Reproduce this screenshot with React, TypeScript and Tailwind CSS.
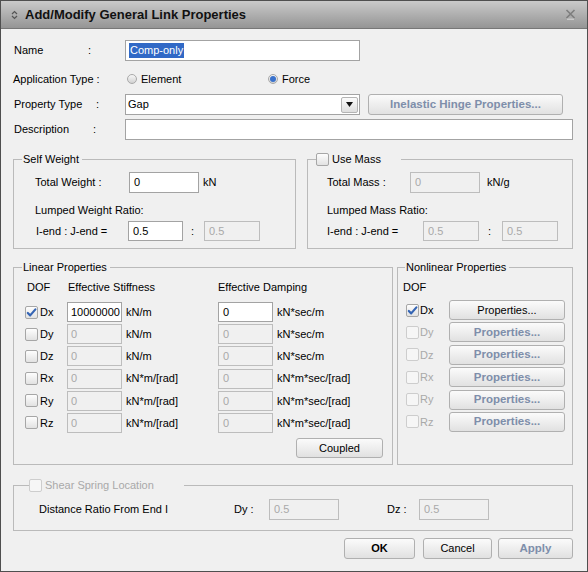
import React from 'react';

function Check({ checked = false, disabled = false }: { checked?: boolean; disabled?: boolean }) {
  return (
    <span
      className={`inline-flex h-[13px] w-[13px] shrink-0 items-center justify-center rounded-[2px] border ${
        disabled ? 'border-[#cdcdcd] bg-[#f6f6f6]' : 'border-[#a6a6a6] bg-linear-to-b from-[#fdfdfd] to-[#e2e2e2]'
      }`}
    >
      {checked && (
        <svg width="11" height="11" viewBox="0 0 11 11">
          <path d="M1.8 6 L4.2 8.4 L9.4 2.4" fill="none" stroke="#3565b4" strokeWidth="2.2" strokeLinecap="round" strokeLinejoin="round" />
        </svg>
      )}
    </span>
  );
}

function Radio({ on = false }: { on?: boolean }) {
  return (
    <span className="inline-flex h-[10px] w-[10px] shrink-0 items-center justify-center rounded-full border border-[#a9a9a9] bg-linear-to-b from-[#f7f7f7] to-[#d2d2d2]">
      {on && <span className="h-[6px] w-[6px] rounded-full bg-[#3a72cc]" />}
    </span>
  );
}

function Box({ value = '', disabled = false, className = '' }: { value?: string; disabled?: boolean; className?: string }) {
  return (
    <div
      className={`flex shrink-0 items-center border pl-[4px] ${
        disabled ? 'border-[#bdbdbd] bg-[#f0f0f0] text-[#a9a9a9]' : 'border-[#a3a3a3] bg-white text-black'
      } ${className}`}
    >
      {value}
    </div>
  );
}

function Btn({ children, disabled = false, bold = false, className = '' }: { children: React.ReactNode; disabled?: boolean; bold?: boolean; className?: string }) {
  return (
    <div
      className={`flex shrink-0 items-center justify-center rounded-[3px] border border-[#b0b0b0] bg-linear-to-b from-[#fbfbfb] to-[#e1e1e1] ${
        disabled ? 'text-[11.5px] font-bold text-[#7e8eaa]' : bold ? 'font-bold text-black' : 'text-black'
      } ${className}`}
    >
      {children}
    </div>
  );
}

function Group({ legend, className = '', legendClass = '', children }: { legend: React.ReactNode; className?: string; legendClass?: string; children: React.ReactNode }) {
  return (
    <div className={`relative shrink-0 border border-[#bababa] ${className}`}>
      <div className={`absolute top-[-8px] flex h-[14px] items-center bg-[#f0f0f0] leading-[14px] ${legendClass}`}>{legend}</div>
      {children}
    </div>
  );
}

const linearRows = [
  { dof: 'Dx', on: true, k: '10000000', ku: 'kN/m', c: '0', cu: 'kN*sec/m' },
  { dof: 'Dy', on: false, k: '0', ku: 'kN/m', c: '0', cu: 'kN*sec/m' },
  { dof: 'Dz', on: false, k: '0', ku: 'kN/m', c: '0', cu: 'kN*sec/m' },
  { dof: 'Rx', on: false, k: '0', ku: 'kN*m/[rad]', c: '0', cu: 'kN*m*sec/[rad]' },
  { dof: 'Ry', on: false, k: '0', ku: 'kN*m/[rad]', c: '0', cu: 'kN*m*sec/[rad]' },
  { dof: 'Rz', on: false, k: '0', ku: 'kN*m/[rad]', c: '0', cu: 'kN*m*sec/[rad]' },
];

export default function App() {
  return (
    <div className="flex h-[572px] w-[588px] flex-col overflow-hidden border border-[#4f4f4f] bg-[#f0f0f0] font-['Liberation_Sans',Arial,sans-serif] text-[11px] text-black">
      {/* title bar */}
      <div className="flex h-[28px] shrink-0 items-center border-b border-[#777777] bg-linear-to-b from-[#cacaca] to-[#959595] pl-[10px] pr-[11px]">
        <svg width="7" height="10" viewBox="0 0 7 10">
          <path d="M1 4 L3.5 1.5 L6 4 M1 6 L3.5 8.5 L6 6" fill="none" stroke="#555555" strokeWidth="1.2" />
        </svg>
        <span className="ml-[7px] text-[13px] font-bold leading-none text-[#111111]">Add/Modify General Link Properties</span>
        <svg className="ml-auto" width="11" height="11" viewBox="0 0 11 11">
          <path d="M1.5 1 L9.5 9 M9.5 1 L1.5 9" fill="none" stroke="#7d7d7d" strokeWidth="1.6" />
          <path d="M2 10.2 L9 10.2" stroke="#d8d8d8" strokeWidth="1" />
        </svg>
      </div>

      <div className="flex flex-1 flex-col pl-[12px] pr-[14px]">
        {/* Name */}
        <div className="mt-[11px] flex h-[21px] items-center">
          <div className="flex w-[112px] shrink-0 items-center">
            <span className="w-[75px] pl-[1px]">Name</span>
            <span>:</span>
          </div>
          <div className="flex h-[21px] w-[235px] items-center border border-[#a3a3a3] bg-white pl-[3px]">
            <span className="h-[15px] bg-[#3169c6] px-[1px] leading-[15px] text-white">Comp-only</span>
          </div>
        </div>

        {/* Application type */}
        <div className="mt-[8px] flex h-[20px] items-center">
          <span className="w-[112px] shrink-0">Application Type :</span>
          <div className="ml-[2px] flex w-[141px] items-center">
            <Radio />
            <span className="ml-[4px]">Element</span>
          </div>
          <div className="flex items-center">
            <Radio on />
            <span className="ml-[4px]">Force</span>
          </div>
        </div>

        {/* Property type */}
        <div className="mt-[5px] flex h-[21px] items-center">
          <div className="flex w-[112px] shrink-0 items-center">
            <span className="w-[83px] pl-[1px]">Property Type</span>
            <span>:</span>
          </div>
          <div className="flex h-[21px] w-[235px] items-center border border-[#a3a3a3] bg-white pl-[2px]">
            <span>Gap</span>
            <div className="ml-auto mr-[1px] flex h-[16px] w-[17px] items-center justify-center rounded-[2px] border border-[#b4b4b4] bg-linear-to-b from-[#fbfbfb] to-[#dedede]">
              <svg width="7" height="5" viewBox="0 0 7 5">
                <path d="M0 0 L7 0 L3.5 5 Z" fill="#111111" />
              </svg>
            </div>
          </div>
          <Btn disabled className="ml-[8px] h-[21px] w-[195px]">
            Inelastic Hinge Properties...
          </Btn>
        </div>

        {/* Description */}
        <div className="mt-[4px] flex h-[21px] items-center">
          <div className="flex w-[112px] shrink-0 items-center">
            <span className="w-[80px] pl-[1px]">Description</span>
            <span>:</span>
          </div>
          <Box className="h-[21px] w-[448px]" />
        </div>

        {/* Self weight / Use mass */}
        <div className="mt-[19px] flex h-[90px] gap-[11px]">
          <Group legend={<span>Self Weight</span>} legendClass="left-[8px] px-[1px] pr-[3px]" className="h-[90px] w-[283px] pl-[21px] pt-[12px]">
            <div className="flex h-[21px] items-center">
              <span className="w-[94px] shrink-0">Total Weight :</span>
              <Box value="0" className="h-[21px] w-[70px]" />
              <span className="ml-[4px]">kN</span>
            </div>
            <div className="mt-[10px] h-[14px] leading-[14px]">Lumped Weight Ratio:</div>
            <div className="mt-[4px] flex h-[20px] items-center">
              <span className="w-[93px] shrink-0 pl-[1px]">I-end : J-end =</span>
              <Box value="0.5" className="h-[20px] w-[55px]" />
              <span className="w-[21px] shrink-0 pl-[8px]">:</span>
              <Box value="0.5" disabled className="h-[20px] w-[56px]" />
            </div>
          </Group>

          <Group
            legend={
              <>
                <Check />
                <span className="ml-[3px]">Use Mass</span>
              </>
            }
            legendClass="left-[8px] pr-[20px]"
            className="h-[90px] flex-1 pl-[19px] pt-[12px]"
          >
            <div className="flex h-[21px] items-center">
              <span className="w-[83px] shrink-0">Total Mass :</span>
              <Box value="0" disabled className="h-[21px] w-[70px]" />
              <span className="ml-[7px]">kN/g</span>
            </div>
            <div className="mt-[10px] h-[14px] leading-[14px]">Lumped Mass Ratio:</div>
            <div className="mt-[4px] flex h-[20px] items-center">
              <span className="w-[96px] shrink-0">I-end : J-end =</span>
              <Box value="0.5" disabled className="h-[20px] w-[56px]" />
              <span className="w-[23px] shrink-0 pl-[9px]">:</span>
              <Box value="0.5" disabled className="h-[20px] w-[56px]" />
            </div>
          </Group>
        </div>

        {/* Linear / Nonlinear */}
        <div className="mt-[18px] flex h-[198px] gap-[4px]">
          <Group legend={<span>Linear Properties</span>} legendClass="left-[8px] px-[1px] pr-[3px]" className="h-[198px] w-[380px] pt-[12px]">
            <div className="flex h-[14px] pl-[13px] leading-[14px]">
              <span className="w-[41px] shrink-0">DOF</span>
              <span className="w-[150px] shrink-0">Effective Stiffness</span>
              <span>Effective Damping</span>
            </div>
            <div className="mt-[8px] flex flex-col gap-[2.2px]">
              {linearRows.map((r) => (
                <div key={r.dof} className="flex h-[20px] items-center pl-[11px]">
                  <div className="flex w-[42px] shrink-0 items-center">
                    <Check checked={r.on} />
                    <span className="ml-[2px]">{r.dof}</span>
                  </div>
                  <Box value={r.k} disabled={!r.on} className="h-[20px] w-[55px] !pl-[3px]" />
                  <span className="w-[96px] shrink-0 pl-[4px]">{r.ku}</span>
                  <Box value={r.c} disabled={!r.on} className="h-[20px] w-[55px]" />
                  <span className="pl-[4px]">{r.cu}</span>
                </div>
              ))}
            </div>
            <Btn className="ml-[282px] mt-[5px] h-[20px] w-[87px]">Coupled</Btn>
          </Group>

          <Group legend={<span>Nonlinear Properties</span>} legendClass="left-[7px] px-[1px] pr-[3px]" className="h-[198px] flex-1 pt-[12px]">
            <div className="h-[14px] pl-[5px] leading-[14px]">DOF</div>
            <div className="mt-[6px] flex flex-col gap-[2.4px]">
              {linearRows.map((r) => (
                <div key={r.dof} className="flex h-[20px] items-center pl-[8px]">
                  <div className="flex w-[43px] shrink-0 items-center">
                    <Check checked={r.on} disabled={!r.on} />
                    <span className={`ml-[1px] ${r.on ? 'text-black' : 'text-[#a9a9a9]'}`}>{r.dof}</span>
                  </div>
                  <Btn disabled={!r.on} className="h-[20px] w-[116px]">
                    Properties...
                  </Btn>
                </div>
              ))}
            </div>
          </Group>
        </div>

        {/* Shear spring */}
        <Group
          legend={
            <>
              <Check disabled />
              <span className="ml-[3px] text-[#a9a9a9]">Shear Spring Location</span>
            </>
          }
          legendClass="left-[15px] pr-[30px]"
          className="mt-[20px] h-[46px] pl-[25px] pt-[13px]"
        >
          <div className="flex h-[21px] items-center">
            <span className="w-[195px] shrink-0">Distance Ratio From End I</span>
            <span className="w-[35px] shrink-0">Dy :</span>
            <Box value="0.5" disabled className="h-[21px] w-[70px]" />
            <span className="ml-[48px] w-[32px] shrink-0">Dz :</span>
            <Box value="0.5" disabled className="h-[21px] w-[70px]" />
          </div>
        </Group>

        {/* buttons */}
        <div className="mt-[7px] flex h-[21px] justify-end">
          <Btn bold className="h-[21px] w-[71px]">OK</Btn>
          <Btn className="ml-[8px] h-[21px] w-[69px]">Cancel</Btn>
          <Btn disabled className="ml-[6px] h-[21px] w-[75px]">Apply</Btn>
        </div>
      </div>
    </div>
  );
}
